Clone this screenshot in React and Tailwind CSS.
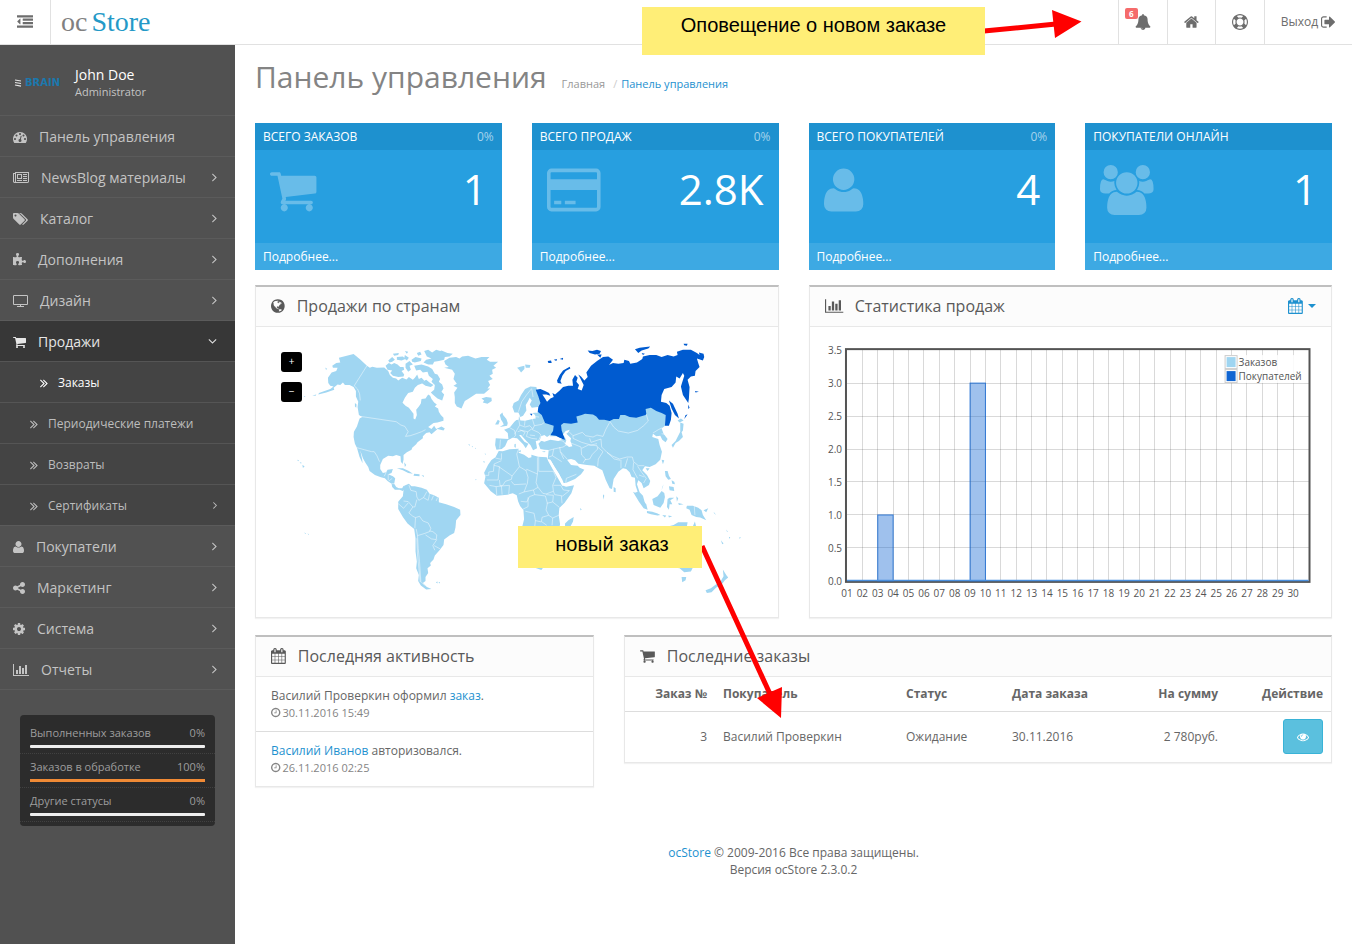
const ICONS = {
  outdent: { x: 0, w: 1792, d: "M384 544v576q0 13-9.5 22.5t-22.5 9.5q-14 0-23-9l-288-288q-9-9-9-23t9-23l288-288q9-9 23-9 13 0 22.5 9.5t9.5 22.5zm1408 768v192q0 13-9.5 22.5t-22.5 9.5h-1728q-13 0-22.5-9.5t-9.5-22.5v-192q0-13 9.5-22.5t22.5-9.5h1728q13 0 22.5 9.5t9.5 22.5zm0-384v192q0 13-9.5 22.5t-22.5 9.5h-1088q-13 0-22.5-9.5t-9.5-22.5v-192q0-13 9.5-22.5t22.5-9.5h1088q13 0 22.5 9.5t9.5 22.5zm0-384v192q0 13-9.5 22.5t-22.5 9.5h-1088q-13 0-22.5-9.5t-9.5-22.5v-192q0-13 9.5-22.5t22.5-9.5h1088q13 0 22.5 9.5t9.5 22.5zm0-384v192q0 13-9.5 22.5t-22.5 9.5h-1728q-13 0-22.5-9.5t-9.5-22.5v-192q0-13 9.5-22.5t22.5-9.5h1728q13 0 22.5 9.5t9.5 22.5z" },
  bell: { x: 0, w: 1792, d: "M912 1696q0-16-16-16-59 0-101.5-42.5t-42.5-101.5q0-16-16-16t-16 16q0 73 51.5 124.5t124.5 51.5q16 0 16-16zm816-288q0 52-38 90t-90 38h-448q0 106-75 181t-181 75-181-75-75-181h-448q-52 0-90-38t-38-90q50-42 91-88t85-119.5 74.5-158.5 50-206 19.5-260q0-152 117-282.5t307-158.5q-8-19-8-39 0-40 28-68t68-28 68 28 28 68q0 20-8 39 190 28 307 158.5t117 282.5q0 139 19.5 260t50 206 74.5 158.5 85 119.5 91 88z" },
  home: { x: 64, w: 1664, d: "M1472 992v480q0 26-19 45t-45 19h-384v-384h-256v384h-384q-26 0-45-19t-19-45v-480q0-1 .5-3t.5-3l575-474 575 474q1 2 1 6zm223-69l-62 74q-8 9-21 11h-3q-13 0-21-7l-692-577-692 577q-12 8-24 7-13-2-21-11l-62-74q-8-10-7-23.5t11-21.5l719-599q32-26 76-26t76 26l244 204v-195q0-14 9-23t23-9h192q14 0 23 9t9 23v408l219 182q10 8 11 21.5t-7 23.5z" },
  lifeRing: { x: 0, w: 1792, d: "M896 0q182 0 348 71t286 191 191 286 71 348-71 348-191 286-286 191-348 71-348-71-286-191-191-286-71-348 71-348 191-286 286-191 348-71zm0 128q-190 0-361 90l194 194q82-28 167-28t167 28l194-194q-171-90-361-90zm-678 1129l194-194q-28-82-28-167t28-167l-194-194q-90 171-90 361t90 361zm678 407q190 0 361-90l-194-194q-82 28-167 28t-167-28l-194 194q171 90 361 90zm0-384q159 0 271.5-112.5t112.5-271.5-112.5-271.5-271.5-112.5-271.5 112.5-112.5 271.5 112.5 271.5 271.5 112.5zm484-217l194 194q90-171 90-361t-90-361l-194 194q28 82 28 167t-28 167z" },
  signOut: { x: 64, w: 1664, d: "M704 1440q0 4 1 20t.5 26.5-3 23.5-10 19.5-20.5 6.5h-320q-119 0-203.5-84.5t-84.5-203.5v-704q0-119 84.5-203.5t203.5-84.5h320q13 0 22.5 9.5t9.5 22.5q0 4 1 20t.5 26.5-3 23.5-10 19.5-20.5 6.5h-320q-66 0-113 47t-47 113v704q0 66 47 113t113 47h312l11.5 1 11.5 3 8 5.5 7 9 2 13.5zm928-544q0 26-19 45l-544 544q-19 19-45 19t-45-19-19-45v-288h-448q-26 0-45-19t-19-45v-384q0-26 19-45t45-19h448v-288q0-26 19-45t45-19 45 19l544 544q19 19 19 45z" },
  dashboard: { x: 0, w: 1792, d: "M384 1152q0-53-37.5-90.5t-90.5-37.5-90.5 37.5-37.5 90.5 37.5 90.5 90.5 37.5 90.5-37.5 37.5-90.5zm192-448q0-53-37.5-90.5t-90.5-37.5-90.5 37.5-37.5 90.5 37.5 90.5 90.5 37.5 90.5-37.5 37.5-90.5zm428 481l101-382q6-26-7.5-48.5t-38.5-29.5-48 6.5-30 39.5l-101 382q-60 5-107 43.5t-63 98.5q-20 77 20 146t117 89 146-20 89-117q16-60-6-117t-72-91zm660-33q0-53-37.5-90.5t-90.5-37.5-90.5 37.5-37.5 90.5 37.5 90.5 90.5 37.5 90.5-37.5 37.5-90.5zm-640-640q0-53-37.5-90.5t-90.5-37.5-90.5 37.5-37.5 90.5 37.5 90.5 90.5 37.5 90.5-37.5 37.5-90.5zm448 192q0-53-37.5-90.5t-90.5-37.5-90.5 37.5-37.5 90.5 37.5 90.5 90.5 37.5 90.5-37.5 37.5-90.5zm320 448q0 261-141 483-19 29-54 29h-1402q-35 0-54-29-141-221-141-483 0-182 71-348t191-286 286-191 348-71 348 71 286 191 191 286 71 348z" },
  newspaper: { x: 0, w: 2048, d: "M1024 512h-384v384h384v-384zm128 640v128h-640v-128h640zm0-768v640h-640v-640h640zm640 768v128h-512v-128h512zm0-256v128h-512v-128h512zm0-256v128h-512v-128h512zm0-256v128h-512v-128h512zm-1536 960v-960h-128v960q0 26 19 45t45 19 45-19 19-45zm1664 0v-1088h-1536v1088q0 33-11 64h1483q26 0 45-19t19-45zm128-1216v1216q0 80-56 136t-136 56h-1664q-80 0-136-56t-56-136v-1088h256v-128h1792z" },
  tags: { x: 0, w: 1920, d: "M448 448q0-53-37.5-90.5t-90.5-37.5-90.5 37.5-37.5 90.5 37.5 90.5 90.5 37.5 90.5-37.5 37.5-90.5zm1067 576q0 53-37 90l-491 492q-39 37-91 37-53 0-90-37l-715-716q-38-37-64.5-101t-26.5-117v-416q0-52 38-90t90-38h416q53 0 117 26.5t102 64.5l715 714q37 39 37 91zm384 0q0 53-37 90l-491 492q-39 37-91 37-36 0-59-14t-53-45l470-470q37-37 37-90 0-52-37-91l-715-714q-38-38-102-64.5t-117-26.5h224q53 0 117 26.5t102 64.5l715 714q37 39 37 91z" },
  puzzle: { x: 64, w: 1664, d: "M1728 1098q0 81-44.5 135t-123.5 54q-41 0-77.5-17.5t-59-38-56.5-38-71-17.5q-110 0-110 124 0 39 16 115t15 115v5q-22 0-33 1-34 3-97.5 11.5t-115.5 13.5-98 5q-61 0-103-26.5t-42-83.5q0-37 17.5-71t38-56.5 38-59 17.5-77.5q0-79-54-123.5t-135-44.5q-84 0-143 45.5t-59 127.5q0 43 15 83t33.5 64.5 33.5 53 15 50.5q0 45-46 89-37 35-117 35-95 0-245-24-9-2-27.5-4t-27.5-4l-13-2q-1 0-3-1-2 0-2-1v-1024q2 1 17.5 3.5t34 5 21.5 3.5q150 24 245 24 80 0 117-35 46-44 46-89 0-22-15-50.5t-33.5-53-33.5-64.5-15-83q0-82 59-127.5t144-45.5q80 0 134 44.5t54 123.5q0 41-17.5 77.5t-38 59-38 56.5-17.5 71q0 57 42 83.5t103 26.5q64 0 180-15t163-17v2q-1 2-3.5 17.5t-5 34-3.5 21.5q-24 150-24 245 0 80 35 117 44 46 89 46 22 0 50.5-15t53-33.5 64.5-33.5 83-15q82 0 127.5 59t45.5 143z" },
  tv: { x: 0, w: 1920, d: "M1792 1248v-960q0-13-9.5-22.5t-22.5-9.5h-1600q-13 0-22.5 9.5t-9.5 22.5v960q0 13 9.5 22.5t22.5 9.5h1600q13 0 22.5-9.5t9.5-22.5zm128-960v960q0 66-47 113t-113 47h-736v128h352q14 0 23 9t9 23v64q0 14-9 23t-23 9h-832q-14 0-23-9t-9-23v-64q0-14 9-23t23-9h352v-128h-736q-66 0-113-47t-47-113v-960q0-66 47-113t113-47h1600q66 0 113 47t47 113z" },
  cart: { x: 64, w: 1664, d: "M704 1536q0 52-38 90t-90 38-90-38-38-90 38-90 90-38 90 38 38 90zm896 0q0 52-38 90t-90 38-90-38-38-90 38-90 90-38 90 38 38 90zm128-1088v512q0 24-16.5 42.5t-40.5 21.5l-1044 122q13 60 13 70 0 16-24 64h920q26 0 45 19t19 45-19 45-45 19h-1024q-26 0-45-19t-19-45q0-11 8-31.5t16-36 21.5-40 15.5-29.5l-177-823h-204q-26 0-45-19t-19-45 19-45 45-19h256q16 0 28.5 6.5t19.5 15.5 13 24.5 8 26 5.5 29.5 4.5 26h1201q26 0 45 19t19 45z" },
  user: { x: 0, w: 1408, flip: true, d: "M1408 131q0 -120 -73 -189.5t-194 -69.5h-874q-121 0 -194 69.5t-73 189.5q0 53 3.5 103.5t14 109t26.5 108.5t43 97.5t62 81t85.5 53.5t111.5 20q9 0 42 -21.5t74.5 -48t108 -48t133.5 -21.5t133.5 21.5t108 48t74.5 48t42 21.5q61 0 111.5 -20t85.5 -53.5t62 -81t43 -97.5t26.5 -108.5t14 -109t3.5 -103.5zM1088 1024q0 -159 -112.5 -271.5t-271.5 -112.5t-271.5 112.5t-112.5 271.5t112.5 271.5t271.5 112.5t271.5 -112.5t112.5 -271.5z" },
  users: { x: 0, w: 1920, d: "M593 896q-162 5-265 128h-134q-82 0-138-40.5t-56-118.5q0-353 124-353 6 0 43.5 21t97.5 42.5 119 21.5q67 0 133-23-5 37-5 66 0 139 81 256zm1071 637q0 120-73 189.5t-194 69.5h-874q-121 0-194-69.5t-73-189.5q0-53 3.5-103.5t14-109 26.5-108.5 43-97.5 62-81 85.5-53.5 111.5-20q10 0 43 21.5t73 48 107 48 135 21.5 135-21.5 107-48 73-48 43-21.5q61 0 111.5 20t85.5 53.5 62 81 43 97.5 26.5 108.5 14 109 3.5 103.5zm-1024-1277q0 106-75 181t-181 75-181-75-75-181 75-181 181-75 181 75 75 181zm704 384q0 159-112.5 271.5t-271.5 112.5-271.5-112.5-112.5-271.5 112.5-271.5 271.5-112.5 271.5 112.5 112.5 271.5zm576 225q0 78-56 118.5t-138 40.5h-134q-103-123-265-128 81-117 81-256 0-29-5-66 66 23 133 23 59 0 119-21.5t97.5-42.5 43.5-21q124 0 124 353zm-128-609q0 106-75 181t-181 75-181-75-75-181 75-181 181-75 181 75 75 181z" },
  share: { x: 128, w: 1536, d: "M1344 1024q133 0 226.5 93.5t93.5 226.5-93.5 226.5-226.5 93.5-226.5-93.5-93.5-226.5q0-12 2-34l-360-180q-92 86-218 86-133 0-226.5-93.5t-93.5-226.5 93.5-226.5 226.5-93.5q126 0 218 86l360-180q-2-22-2-34 0-133 93.5-226.5t226.5-93.5 226.5 93.5 93.5 226.5-93.5 226.5-226.5 93.5q-126 0-218-86l-360 180q2 22 2 34t-2 34l360 180q92-86 218-86z" },
  cog: { x: 128, w: 1536, d: "M1152 896q0-106-75-181t-181-75-181 75-75 181 75 181 181 75 181-75 75-181zm512-109v222q0 12-8 23t-20 13l-185 28q-19 54-39 91 35 50 107 138 10 12 10 25t-9 23q-27 37-99 108t-94 71q-12 0-26-9l-138-108q-44 23-91 38-16 136-29 186-7 28-36 28h-222q-14 0-24.5-8.5t-11.5-21.5l-28-184q-49-16-90-37l-141 107q-10 9-25 9-14 0-25-11-126-114-165-168-7-10-7-23 0-12 8-23 15-21 51-66.5t54-70.5q-27-50-41-99l-183-27q-13-2-21-12.5t-8-23.5v-222q0-12 8-23t19-13l186-28q14-46 39-92-40-57-107-138-10-12-10-24 0-10 9-23 26-36 98.5-107.5t94.5-71.5q13 0 26 10l138 107q44-23 91-38 16-136 29-186 7-28 36-28h222q14 0 24.5 8.5t11.5 21.5l28 184q49 16 90 37l142-107q9-9 24-9 13 0 25 10 129 119 165 170 7 8 7 22 0 12-8 23-15 21-51 66.5t-54 70.5q26 50 41 98l183 28q13 2 21 12.5t8 23.5z" },
  barChart: { x: 0, w: 2048, d: "M640 896v512h-256v-512h256zm384-512v1024h-256v-1024h256zm1024 1152v128h-2048v-1536h128v1408h1920zm-640-896v768h-256v-768h256zm384-384v1152h-256v-1152h256z" },
  angleRight: { x: 576, w: 640, d: "M1171 960q0 13-10 23l-466 466q-10 10-23 10t-23-10l-50-50q-10-10-10-23t10-23l393-393-393-393q-10-10-10-23t10-23l50-50q10-10 23-10t23 10l466 466q10 10 10 23z" },
  angleDown: { x: 320, w: 1152, d: "M1395 736q0 13-10 23l-466 466q-10 10-23 10t-23-10l-466-466q-10-10-10-23t10-23l50-50q10-10 23-10t23 10l393 393 393-393q10-10 23-10t23 10l50 50q10 10 10 23z" },
  angleDouble: { x: 384, w: 1024, d: "M979 960q0 13-10 23l-466 466q-10 10-23 10t-23-10l-50-50q-10-10-10-23t10-23l393-393-393-393q-10-10-10-23t10-23l50-50q10-10 23-10t23 10l466 466q10 10 10 23zm384 0q0 13-10 23l-466 466q-10 10-23 10t-23-10l-50-50q-10-10-10-23t10-23l393-393-393-393q-10-10-10-23t10-23l50-50q10-10 23-10t23 10l466 466q10 10 10 23z" },
  card: { x: 0, w: 1920, d: "M1760 128q66 0 113 47t47 113v1216q0 66-47 113t-113 47h-1600q-66 0-113-47t-47-113v-1216q0-66 47-113t113-47h1600zm-1600 128q-13 0-22.5 9.5t-9.5 22.5v224h1664v-224q0-13-9.5-22.5t-22.5-9.5h-1600zm1600 1280q13 0 22.5-9.5t9.5-22.5v-608h-1664v608q0 13 9.5 22.5t22.5 9.5h1600zm-1504-128v-128h256v128h-256zm384 0v-128h384v128h-384z" },
  calendar: { x: 64, w: 1664, d: "M192 1664h288v-288h-288v288zm352 0h320v-288h-320v288zm-352-352h288v-320h-288v320zm352 0h320v-320h-320v320zm-352-384h288v-288h-288v288zm736 736h320v-288h-320v288zm-384-736h320v-288h-320v288zm768 736h288v-288h-288v288zm-384-352h320v-320h-320v320zm-352-864v-288q0-13-9.5-22.5t-22.5-9.5h-64q-13 0-22.5 9.5t-9.5 22.5v288q0 13 9.5 22.5t22.5 9.5h64q13 0 22.5-9.5t9.5-22.5zm736 864h288v-320h-288v320zm-384-384h320v-288h-320v288zm384 0h288v-288h-288v288zm32-480v-288q0-13-9.5-22.5t-22.5-9.5h-64q-13 0-22.5 9.5t-9.5 22.5v288q0 13 9.5 22.5t22.5 9.5h64q13 0 22.5-9.5t9.5-22.5zm384-64v1280q0 52-38 90t-90 38h-1408q-52 0-90-38t-38-90v-1280q0-52 38-90t90-38h128v-96q0-66 47-113t113-47h64q66 0 113 47t47 113v96h384v-96q0-66 47-113t113-47h64q66 0 113 47t47 113v96h128q52 0 90 38t38 90z" },
  clock: { x: 128, w: 1536, d: "M1024 544v448q0 14-9 23t-23 9h-320q-14 0-23-9t-9-23v-64q0-14 9-23t23-9h224v-352q0-14 9-23t23-9h64q14 0 23 9t9 23zm416 352q0-148-73-273t-198-198-273-73-273 73-198 198-73 273 73 273 198 198 273 73 273-73 198-198 73-273zm224 0q0 209-103 385.5t-279.5 279.5-385.5 103-385.5-103-279.5-279.5-103-385.5 103-385.5 279.5-279.5 385.5-103 385.5 103 279.5 279.5 103 385.5z" },
  eye: { x: 0, w: 1792, d: "M1664 960q-152-236-381-353 61 104 61 225 0 185-131.5 316.5t-316.5 131.5-316.5-131.5-131.5-316.5q0-121 61-225-229 117-381 353 133 205 333.5 326.5t434.5 121.5 434.5-121.5 333.5-326.5zm-720-384q0-20-14-34t-34-14q-125 0-214.5 89.5t-89.5 214.5q0 20 14 34t34 14 34-14 14-34q0-86 61-147t147-61q20 0 34-14t14-34zm848 384q0 34-20 69-140 230-376.5 368.5t-499.5 138.5-499.5-139-376.5-368q-20-35-20-69t20-69q140-229 376.5-368t499.5-139 499.5 139 376.5 368q20 35 20 69z" },
  globe: { x: 128, w: 1536, d: "M896 128q209 0 385.5 103t279.5 279.5 103 385.5-103 385.5-279.5 279.5-385.5 103-385.5-103-279.5-279.5-103-385.5 103-385.5 279.5-279.5 385.5-103zm274 521q-2 1-9.5 9.5t-13.5 9.5q2 0 4.5-5t5-11 3.5-7q6-7 22-15 14-6 52-12 34-8 51 11-2-2 9.5-13t14.5-12q3-2 15-4.5t15-7.5l2-22q-12 1-17.5-7t-6.5-21q0 2-6 8 0-7-4.5-8t-11.5 1-9 1q-10-3-15-7.5t-8-16.5-4-15q-2-5-9.5-11t-9.5-10q-1-2-2.5-5.5t-3-6.5-4-5.5-5.5-2.5-7 5-7.5 10-4.5 5q-3-2-6-1.5t-4.5 1-4.5 3-5 3.5q-3 2-8.5 3t-8.5 2q15-5-1-11-10-4-16-3 9-4 7.5-12t-8.5-14h5q-1-4-8.5-8.5t-17.5-8.5-13-6q-8-5-34-9.5t-33-.5q-5 6-4.5 10.5t4 14 3.5 12.5q1 6-5.5 13t-6.5 12q0 7 14 15.5t10 21.5q-3 8-16 16t-16 12q-5 8-1.5 18.5t10.5 16.5q2 2 1.5 4t-3.5 4.5-5.5 4-6.5 3.5l-3 2q-11 5-20.5-6t-13.5-26q-7-25-16-30-23-8-29 1-5-13-41-26-25-9-58-4 6-1 0-15-7-15-19-12 3-6 4-17.5t1-13.5q3-13 12-23 1-1 7-8.5t9.5-13.5.5-6q35 4 50-11 5-5 11.5-17t10.5-17q9-6 14-5.5t14.5 5.5 14.5 5q14 1 15.5-11t-7.5-20q12 1 3-17-4-7-8-9-12-4-27 5-8 4 2 8-1-1-9.5 10.5t-16.5 17.5-16-5q-1-1-5.5-13.5t-9.5-13.5q-8 0-16 15 3-8-11-15t-24-8q19-12-8-27-7-4-20.5-5t-19.5 4q-5 7-5.5 11.5t5 8 10.5 5.5 11.5 4 8.5 3q14 10 8 14-2 1-8.5 3.5t-11.5 4.5-6 4q-3 4 0 14t-2 14q-5-5-9-17.5t-7-16.5q7 9-25 6l-10-1q-4 0-16 2t-20.5 1-13.5-8q-4-8 0-20 1-4 4-2-4-3-11-9.5t-10-8.5q-46 15-94 41 6 1 12-1 5-2 13-6.5t10-5.5q34-14 42-7l5-5q14 16 20 25-7-4-30-1-20 6-22 12 7 12 5 18-4-3-11.5-10t-14.5-11-15-5q-16 0-22 1-146 80-235 222 7 7 12 8 4 1 5 9t2.5 11 11.5-3q9 8 3 19 1-1 44 27 19 17 21 21 3 11-10 18-1-2-9-9t-9-4q-3 5 .5 18.5t10.5 12.5q-7 0-9.5 16t-2.5 35.5-1 23.5l2 1q-3 12 5.5 34.5t21.5 19.5q-13 3 20 43 6 8 8 9 3 2 12 7.5t15 10 10 10.5q4 5 10 22.5t14 23.5q-2 6 9.5 20t10.5 23q-1 0-2.5 1t-2.5 1q3 7 15.5 14t15.5 13q1 3 2 10t3 11 8 2q2-20-24-62-15-25-17-29-3-5-5.5-15.5t-4.5-14.5q2 0 6 1.5t8.5 3.5 7.5 4 2 3q-3 7 2 17.5t12 18.5 17 19 12 13q6 6 14 19.5t0 13.5q9 0 20 10t17 20q5 8 8 26t5 24q2 7 8.5 13.5t12.5 9.5l16 8 13 7q5 2 18.5 10.5t21.5 11.5q10 4 16 4t14.5-2.5 13.5-3.5q15-2 29 15t21 21q36 19 55 11-2 1 .5 7.5t8 15.5 9 14.5 5.5 8.5q5 6 18 15t18 15q6-4 7-9-3 8 7 20t18 10q14-3 14-32-31 15-49-18 0-1-2.5-5.5t-4-8.5-2.5-8.5 0-7.5 5-3q9 0 10-3.5t-2-12.5-4-13q-1-8-11-20t-12-15q-5 9-16 8t-16-9q0 1-1.5 5.5t-1.5 6.5q-13 0-15-1 1-3 2.5-17.5t3.5-22.5q1-4 5.5-12t7.5-14.5 4-12.5-4.5-9.5-17.5-2.5q-19 1-26 20-1 3-3 10.5t-5 11.5-9 7q-7 3-24 2t-24-5q-13-8-22.5-29t-9.5-37q0-10 2.5-26.5t3-25-5.5-24.5q3-2 9-9.5t10-10.5q2-1 4.5-1.5t4.5 0 4-1.5 3-6q-1-1-4-3-3-3-4-3 7 3 28.5-1.5t27.5 1.5q15 11 22-2 0-1-2.5-9.5t-.5-13.5q5 27 29 9 3 3 15.5 5t17.5 5q3 2 7 5.5t5.5 4.5 5-.5 8.5-6.5q10 14 12 24 11 40 19 44 7 3 11 2t4.5-9.5 0-14-1.5-12.5l-1-8v-18l-1-8q-15-3-18.5-12t1.5-18.5 15-18.5q1-1 8-3.5t15.5-6.5 12.5-8q21-19 15-35 7 0 11-9-1 0-5-3t-7.5-5-4.5-2q9-5 2-16 5-3 7.5-11t7.5-10q9 12 21 2 7-8 1-16 5-7 20.5-10.5t18.5-9.5q7 2 8-2t1-12 3-12q4-5 15-9t13-5l17-11q3-4 0-4 18 2 31-11 10-11-6-20 3-6-3-9.5t-15-5.5q3-1 11.5-.5t10.5-1.5q15-10-7-16-17-5-43 12zm-163 877q206-36 351-189-3-3-12.5-4.5t-12.5-3.5q-18-7-24-8 1-7-2.5-13t-8-9-12.5-8-11-7q-2-2-7-6t-7-5.5-7.5-4.5-8.5-2-10 1l-3 1q-3 1-5.5 2.5t-5.5 3-4 3 0 2.5q-21-17-36-22-5-1-11-5.5t-10.5-7-10-1.5-11.5 7q-5 5-6 15t-2 13q-7-5 0-17.5t2-18.5q-3-6-10.5-4.5t-12 4.5-11.5 8.5-9 6.5-8.5 5.5-8.5 7.5q-3 4-6 12t-5 11q-2-4-11.5-6.5t-9.5-5.5q2 10 4 35t5 38q7 31-12 48-27 25-29 40-4 22 12 26 0 7-8 20.5t-7 21.5q0 6 2 16z" },
};

function Icon({ name, className = "h-3.5" }) {
  const { x, w, d, flip } = ICONS[name];
  return (
    <svg aria-hidden="true" viewBox={`${x} 0 ${w} 1792`} fill="currentColor" className={`w-auto shrink-0 overflow-visible ${className}`}>
      <path d={d} transform={flip ? "translate(0,1536) scale(1,-1)" : undefined} />
    </svg>
  );
}

const MENU_TOP = [
  { icon: "dashboard", label: "Панель управления" },
  { icon: "newspaper", label: "NewsBlog материалы", arrow: true },
  { icon: "tags", label: "Каталог", arrow: true },
  { icon: "puzzle", label: "Дополнения", arrow: true },
  { icon: "tv", label: "Дизайн", arrow: true },
];
const MENU_SUB = [
  { label: "Заказы", active: true },
  { label: "Периодические платежи" },
  { label: "Возвраты" },
  { label: "Сертификаты", arrow: true },
];
const MENU_BOTTOM = [
  { icon: "user", label: "Покупатели", arrow: true },
  { icon: "share", label: "Маркетинг", arrow: true },
  { icon: "cog", label: "Система", arrow: true },
  { icon: "barChart", label: "Отчеты", arrow: true },
];
const STATS = [
  { label: "Выполненных заказов", value: 0 },
  { label: "Заказов в обработке", value: 100 },
  { label: "Другие статусы", value: 0 },
];
const TILES = [
  { title: "Всего заказов", pct: "0%", icon: "cart", value: "1" },
  { title: "Всего продаж", pct: "0%", icon: "card", value: "2.8K" },
  { title: "Всего покупателей", pct: "0%", icon: "user", value: "4" },
  { title: "Покупатели онлайн", pct: "", icon: "users", value: "1" },
];

function MenuItem({ icon, label, arrow }) {
  return (
    <li className="border-t border-[#5b5b5b]">
      <a href="#" className="flex h-10 items-center pr-[18px] pl-[13px] text-sm text-[#c4c4c4]">
        <span className="flex grow items-center gap-3 pt-0.5"><Icon name={icon} />{label}</span>
        {arrow && <Icon name="angleRight" />}
      </a>
    </li>
  );
}

function Sidebar() {
  return (
    <nav className="w-[235px] shrink-0 bg-[#515151]">
      <div className="flex h-[70px] items-center pt-1.5 pl-3.5">
        <div className="flex w-[61px] items-center gap-[3px]">
          <svg aria-hidden="true" viewBox="0 0 8 8" className="h-2 w-2">
            <path d="M1 1 7 2M1 3.5 7 4.500M1 6 7 7.200" stroke="#e5e5e5" strokeWidth="1.200" fill="none" />
          </svg>
          <span className="font-['DejaVu_Sans',sans-serif] text-[10px] leading-3 font-bold text-[#1c78ad]">BRAIN</span>
        </div>
        <div>
          <div className="text-sm leading-[18px] text-white">John Doe</div>
          <div className="text-[11px] leading-4 text-[#c4c4c4]">Administrator</div>
        </div>
      </div>
      <ul className="border-b border-[#5b5b5b]">
        {MENU_TOP.map((m) => <MenuItem key={m.label} {...m} />)}
        <li className="border-t border-[#5b5b5b]">
          <a href="#" className="flex h-10 items-center bg-[#373737] pr-[18px] pl-[13px] text-sm text-[#e6e6e6]">
            <span className="flex grow items-center gap-3 pt-0.5"><Icon name="cart" />Продажи</span>
            <Icon name="angleDown" />
          </a>
          <ul className="bg-[#444444]">
            {MENU_SUB.map((m) => (
              <li key={m.label} className="border-t border-[#555555]">
                <a href="#" className={`flex h-10 items-center pr-[18px] text-xs ${m.active ? "pl-10 text-white" : "pl-[30px] text-[#bdbdbd]"}`}>
                  <span className="flex grow items-center gap-2.5 pt-0.5"><Icon name="angleDouble" />{m.label}</span>
                  {m.arrow && <Icon name="angleRight" className="h-3" />}
                </a>
              </li>
            ))}
          </ul>
        </li>
        {MENU_BOTTOM.map((m) => <MenuItem key={m.label} {...m} />)}
      </ul>
      <ul className="mx-5 mt-[25px] rounded-sm bg-[#2c2c2c] pt-2.5 pb-1 text-[11px] text-[#9d9d9d]">
        {STATS.map((s) => (
          <li key={s.label} className="mb-[5px] border-b border-dotted border-[#414141] px-2.5 pb-[5px] leading-4 last:mb-0">
            <div className="flex justify-between"><span>{s.label}</span><span>{s.value}%</span></div>
            <div className="mt-1 h-[3px] rounded-[1px] bg-[#eeeeee]">
              <div className="h-[3px] bg-[#f08a35]" style={{ width: `${s.value}%` }} />
            </div>
          </li>
        ))}
      </ul>
    </nav>
  );
}

function Header() {
  const item = "flex items-center border-l border-[#e1e1e1] px-4";
  return (
    <header className="flex h-[45px] border-b border-[#e1e1e1] bg-white text-[#6d6d6d]">
      <button type="button" aria-label="Меню" className="flex w-[51px] items-center justify-center border-r border-[#e1e1e1]">
        <Icon name="outdent" className="h-4" />
      </button>
      <a href="#" className="flex items-center gap-1 pl-2.5 font-['Liberation_Serif',serif] text-[28px] leading-10">
        <span className="text-[#808080]">oc</span><span className="text-[#2499c7]">Store</span>
      </a>
      <div className="ml-auto flex">
        <button type="button" aria-label="Уведомления" className={`relative ${item}`}>
          <Icon name="bell" className="h-4" />
          <span className="absolute top-2 left-1.5 rounded-xs bg-[#f56b6b] px-1 text-[8px] leading-[11px] font-bold text-white">6</span>
        </button>
        <a href="#" aria-label="Магазин" className={item}><Icon name="home" className="h-4" /></a>
        <a href="#" aria-label="Помощь" className={item}><Icon name="lifeRing" className="h-4" /></a>
        <a href="#" className={`gap-[3px] text-xs ${item}`}>Выход<Icon name="signOut" className="h-4" /></a>
      </div>
    </header>
  );
}

function Tile({ title, pct, icon, value }) {
  return (
    <section className="bg-[#279fe0] text-white">
      <h2 className="flex justify-between bg-[#1e91cf] px-2 py-[5px] text-xs leading-[17px] uppercase">
        {title}<span className="text-[#a5d3ec]">{pct}</span>
      </h2>
      <div className="flex h-[93px] items-start justify-between p-[15px]">
        <Icon name={icon} className="h-[50px] opacity-30" />
        <span className="text-[42px] leading-[48px]">{value}</span>
      </div>
      <div className="bg-[#3da9e3] px-2 py-[5px] text-xs leading-[17px]"><a href="#">Подробнее...</a></div>
    </section>
  );
}

function Panel({ icon, title, action, children, className = "" }) {
  return (
    <section className={`self-start border border-t-2 border-[#e8e8e8] border-t-[#bfbfbf] bg-white shadow-[0_1px_1px_rgba(0,0,0,0.05)] ${className}`}>
      <div className="flex h-10 items-center border-b border-[#e8e8e8] bg-[#fcfcfc] px-[15px] pb-0.5">
        <h3 className="flex grow items-center gap-3 text-base text-[#595959]"><Icon name={icon} className="h-4" />{title}</h3>
        {action}
      </div>
      {children}
    </section>
  );
}

const AMERICA = [
  "M252 68 296 57 316 73 336 92 345 98 352 95 366 98 388 97 400 108 405 120 414 128 424 130 430 136 442 128 455 133 462 126 474 134 480 128 487 118 492 132 500 128 508 136 500 146 489 150 480 158 474 170 460 174 450 188 443 203 452 212 462 218 476 236 476 250 481 253 486 240 484 224 492 214 498 205 500 192 512 190 520 178 526 182 530 192 538 202 546 208 540 214 550 220 552 230 558 240 566 248 566 257 548 262 536 264 520 276 530 282 538 272 544 282 560 274 570 280 566 286 548 282 530 298 524 292 514 294 504 304 504 310 488 322 484 328 472 338 470 344 456 352 446 360 446 374 443 387 438 380 437 364 424 360 414 364 400 362 384 372 376 390 376 402 384 414 394 412 398 404 414 402 410 414 400 418 414 424 421 430 418 446 424 456 432 460 442 460 446 452 452 458 444 468 434 464 420 464 412 456 410 446 398 438 390 430 378 427 360 420 344 408 340 396 332 384 324 370 316 346 322 374 323 385 314 366 306 338 300 326 296 306 297 290 306 274 314 250 322 246 312 240 308 216 310 200 303 184 303 168 296 156 284 150 270 150 264 142 256 150 248 148 236 158 238 164 214 172 190 178 192 174 226 162 236 154 226 152 220 144 219 128 230 112 244 108 248 98 234 98 232 92 244 84 256 82Z",
  "M392 92 402 84 410 88 418 84 428 88 436 96 446 96 448 104 440 108 448 118 446 124 430 126 414 122 406 114 412 106 398 104Z",
  "M400 76 412 66 420 74 412 80 404 82ZM414 56 432 54 430 60 418 62ZM426 66 444 64 452 72 440 76 426 74ZM450 60 462 68 456 76 448 70ZM452 86 464 78 474 88 464 92 468 104 460 110 452 98ZM450 48 460 50 456 56ZM470 74 482 66 500 70 498 78 480 82 472 80ZM486 54 496 50 500 58 490 62ZM478 92 500 88 520 94 532 102 540 116 548 118 556 132 552 140 562 148 566 160 560 170 568 178 562 196 548 190 534 178 528 172 538 164 540 150 530 140 534 132 522 122 518 110 504 112 496 104 484 106ZM498 142 514 134 526 144 536 150 528 156 512 152ZM508 48 520 44 532 52 544 44 556 48 560 46 578 54 594 56 584 64 570 66 568 74 552 78 538 80 534 88 520 88 506 82 514 74 530 70 516 64Z",
  "M568 98 582 96 572 88 568 78 584 68 604 66 614 70 622 64 640 62 662 70 680 66 704 66 696 74 706 80 730 80 716 92 724 98 712 104 714 116 704 122 714 132 700 138 706 150 698 160 706 160 688 176 664 176 640 192 630 198 620 220 606 214 600 204 600 186 598 172 608 158 596 152 606 146 596 132 600 116 592 104Z",
  "M680 190 694 186 710 188 711 198 698 206 684 202 688 196Z",
  "M448 452 462 446 470 454 480 454 500 458 516 464 524 476 536 480 552 488 552 502 574 508 598 516 616 524 617 540 604 556 602 578 598 594 584 602 568 614 566 630 554 646 540 662 536 674 526 684 528 692 518 700 520 714 512 726 512 738 504 744 516 756 530 762 514 764 498 752 490 738 492 720 484 700 486 680 482 650 482 610 478 582 458 566 444 546 430 522 430 500 444 484 446 466Z",
  "M426 400 444 400 462 408 474 416 460 414 444 406ZM478 416 494 418 494 424 476 422ZM448 382 454 390 450 396ZM454 376 462 384ZM500 420 508 422 506 426ZM543 742 548 740 548 746ZM551 742 556 741 554 746ZM126 374 132 376 130 379ZM134 381 140 383 138 386ZM142 390 149 394 144 399ZM148 593 153 595 151 597ZM158 596 162 598 160 600ZM172 181 184 178 182 182ZM146 183 151 183 150 186ZM211 97 217 102 213 104ZM300 204 305 208 304 218 300 214ZM312 228 324 244 316 242ZM640 328 646 329 644 332ZM651 333 655 335 652 337ZM661 338 664 340 661 342ZM684 379 691 380 688 383ZM661 432 666 434 663 436ZM690 355 693 357 691 360Z",
];
const AMERICA_BORDERS = "M336 92 298 152 308 162 314 176 316 196M316 244 424 260 438 270 450 274 460 290 452 304 466 302 484 296 500 290 512 284M306 338 328 344 350 350 358 350 366 362 374 380M394 412 388 424M400 418 400 436M412 430 402 438M410 446 420 446M462 450 468 466 484 470 486 486 492 496 506 488 516 470M506 488 520 496 524 478M530 496 536 482M544 498 548 488M446 498 460 500 474 516 480 516 486 494M430 506 446 520 460 504M474 516 462 534 474 544 482 548 480 580M482 548 494 544 504 558 520 564 528 580 524 590 508 596 488 602 484 582M488 602 490 640 494 680 498 740 510 752M486 610 488 660 492 700 496 742M512 600 530 612 544 614 546 600 534 590 524 588M546 614 534 632 540 646M538 632 556 642";

const EURASIA = [
  "M-42 310-4 312-6 294-17 284 0 277 14 260 20 255 26 254 28 243 32 256 46 257 68 252 78 250 76 240 68 234 84 232 90 210 200 200 420 216 468 238 466 272 456 280 462 296 474 312 468 322 458 314 452 302 440 304 430 296 428 306 446 312 450 330 457 350 452 374 438 388 420 396 406 394 398 406 412 420 422 438 418 450 402 460 396 444 386 436 382 448 390 472 400 482 410 520 392 500 374 474 384 470 378 452 376 428 366 426 360 412 350 402 340 400 326 410 312 432 307 462 300 460 288 434 278 406 264 398 254 392 232 390 206 386 196 376 184 372 172 374 184 390 204 392 210 398 224 404 214 418 196 432 168 444 160 444 148 416 134 396 122 374 114 372 117 345 104 344 92 342 86 326 94 318 110 312 78 318 82 340 70 346 62 330 50 318 34 300 28 300 44 320 56 326 48 340 40 328 22 310 8 308-6 316-14 334-24 342-40 344-44 330Z",
  "M8 216 12 204 26 196 34 180 46 162 62 154 80 156 84 176 94 200 84 216 66 218 60 208 66 196 60 188 54 200 48 210 50 226 40 242 32 246 26 232 14 232Z",
  "M-26 254-30 240-22 232-20 240-10 252-6 264-8 272-30 276-18 268-22 260ZM-44 268-36 254-30 258-34 268ZM22 98 34 94 44 92 44 102 34 112 28 104ZM46 88 62 90 60 98 48 98ZM24 348 34 346 32 352ZM96 350 108 348 104 352ZM14 328 18 326 18 338 14 336Z",
  "M512 262 522 266 520 286 516 292 520 306 508 318 498 324 490 338 486 330 498 318 504 306 512 290ZM504 256 514 250 522 256 510 262ZM456 374 464 376 460 388ZM408 400 420 400 414 408ZM466 408 474 408 478 422 484 432 476 434 468 424ZM486 436 494 440 496 448 488 446ZM478 454 492 456 494 468 480 466ZM458 456 462 448 456 466ZM312 456 318 460 318 472 312 470Z",
  "M370 470 382 476 396 492 410 508 414 524 402 520 388 500ZM428 492 444 484 456 468 464 474 466 486 462 504 452 518 432 510ZM474 492 480 488 494 488 482 496 488 508 480 508 478 524 472 516ZM412 528 428 530 444 536 452 540 444 542 424 538 412 534ZM458 540 470 542 466 548ZM476 542 488 544 478 548ZM500 484 506 490 502 500ZM506 504 522 508 508 510ZM532 512 550 512 566 518 576 526 580 540 590 556 572 548 560 546 546 540 540 524 530 520ZM582 526 596 520 590 532ZM596 514 604 520ZM612 530 620 540 614 536ZM622 542 630 550ZM632 556 638 564ZM650 584 656 592 652 590ZM634 616 642 626 638 628ZM658 606 662 606 660 612ZM690 606 694 608 690 612Z",
  "M478 574 492 570 506 562 534 562 532 574 544 584 550 574 556 560 560 576 566 590 574 620 572 650 562 684 550 698 544 710 524 712 510 700 440 690 424 650 440 600ZM516 726 530 726 528 736 518 742ZM640 704 650 720 656 728 646 736 634 752 620 758 606 772 592 774 588 766 604 760 620 748 634 738 642 724ZM192 546 190 560 178 582 166 580 166 566 176 556ZM202 520 206 524ZM212 518 216 524 212 526ZM280 478 284 482 280 494ZM168 546 172 550Z",
];
const RUSSIA = [
  "M78 164 92 162 106 168 118 174 122 182 110 178 98 178 106 190 112 200 122 190 132 186 128 174 136 178 150 166 160 156 176 152 190 152 188 134 196 120 204 128 200 140 208 150 204 162 216 166 222 150 206 118 214 124 224 136 234 126 230 112 244 92 262 78 280 66 296 64 310 74 298 90 310 84 326 86 342 84 344 74 358 78 362 86 382 82 398 72 400 64 420 60 440 60 456 66 474 60 492 64 504 60 502 50 520 44 544 44 562 54 570 60 568 52 582 56 584 66 580 76 562 70 566 84 570 96 558 108 556 122 544 124 534 134 540 156 538 190 536 204 520 180 514 154 524 122 520 114 510 130 500 124 498 142 486 156 464 162 456 180 454 200 470 204 480 212 486 234 484 254 478 272 466 272 468 240 456 234 440 228 424 218 408 222 410 236 408 240 380 248 360 246 346 240 332 240 328 252 312 252 300 258 284 254 268 254 260 244 250 238 226 236 216 240 200 244 204 262 184 266 162 264 154 270 156 286 166 314 150 310 138 302 122 300 130 288 132 272 106 264 96 240 84 230 86 214 92 204 86 184Z",
  "M142 136 150 120 160 106 180 95 182 100 168 108 158 122 152 138 156 146 144 144ZM114 78 124 76 126 84 116 84ZM132 74 142 72 140 78ZM150 72 160 68 160 74ZM234 46 248 48 262 44 274 48 270 56 256 58 240 54ZM262 58 276 58 272 68ZM376 42 390 38 402 36 422 34 416 40 396 46 386 54ZM396 54 406 56 400 60ZM522 26 534 26 532 32 524 30ZM478 196 490 206 504 236 508 250 496 240 486 220ZM536 208 540 218 536 222ZM528 240 534 238 524 252ZM556 168 568 170 558 172ZM60 236 68 236 66 242Z",
];
const EURASIA_BORDERS = "M26 248 30 270 22 284 14 298M30 270 46 276 60 272 68 280 54 290 36 286 24 290M46 256 44 272M68 252 74 272 96 268 104 262M74 272 68 284 86 292 94 300 86 318M54 290 50 304 66 310 82 312M60 300 76 302M30 284 46 292 40 302M72 244 88 246M80 234 78 226M26 230 36 200 50 180 66 160M66 162 70 186M0 278 14 286 18 300 12 308M-28 314-30 340M118 346 132 342 160 336 170 330 160 318 138 314M150 336 152 350 172 372M132 342 128 362 118 366M128 362 156 380M152 350 162 372M168 444 170 430 200 418M170 332 172 316M178 290 190 302 190 310 216 322 244 330 262 326M190 302 218 292 228 302 250 306 262 300 280 304 288 284 300 262M240 310 244 322 262 316 274 312M172 320 194 328 214 336 216 360 228 372 220 384M216 340 236 330 262 332 264 342 248 358 240 372 226 374M264 336 280 350 266 372 264 394M274 312 276 336 292 352 310 364 330 372 352 366 368 366M292 352 314 372 332 376M300 258 312 276 326 288 356 294 384 286 402 272 416 258 410 238M334 374 334 400M354 370 346 396M368 366 372 380 386 392 404 392M372 382 370 404 384 430M384 394 396 412 410 430 402 444M388 420 404 426M430 294 446 284 458 278M554 512 556 540M456 296 466 298";

const AFRICA = "M72 243 84 244 104 238 132 236 132 248 148 254 162 264 170 262 170 254 190 260 216 262 220 272 234 298 248 322 262 346 274 350 298 346 290 370 270 398 254 414 252 436 256 462 250 500 230 560 200 600 170 590 150 520 140 480 148 448 146 420 136 408 130 394 126 376 114 370 98 374 66 377 48 364 28 340 32 320 28 308 40 284 50 270 62 262Z";
const AFRICA_BORDERS = "M30 316H42V306L56 304 58 282 80 272M62 264 80 268 80 250M58 286 74 290 70 330 36 330M72 290 112 318 110 328 92 334 84 346 76 348 74 330M132 236 126 252 134 290 112 318M134 290 154 302 156 298 188 312V262M192 260V304H236M188 312 184 338 190 352 176 360 148 366 158 340 160 322 154 302M236 304 244 322 234 346 236 364 214 372 204 370 190 352M148 366 132 372M110 334 118 344 154 342M44 346 64 350 66 376M64 350 80 348 82 374M80 348 104 346 102 372M236 346 258 346 266 360 284 362 264 378 240 374 236 364M260 378 262 400M214 374 236 376 234 396 254 412M176 360 180 374 164 380 156 396 138 394M160 382 160 410 144 418M180 374 212 378 218 400 214 420 222 436 202 442 200 456 182 452 178 430 152 424M222 436 234 444 252 436M202 456 216 466M234 444 232 466M182 452 180 470M234 396 216 400";

function WorldMap() {
  return (
    <svg role="img" aria-label="Продажи по странам" viewBox="48 21 1476 780" className="h-[260px] w-full">
      <g fill="#a0d6f2">{AMERICA.map((d) => <path key={d} d={d} />)}</g>
      <path d={AMERICA_BORDERS} fill="none" stroke="#fff" strokeWidth="2" opacity=".7" />
      <g transform="translate(660 105)">
        <path d={AFRICA} fill="#a0d6f2" />
        <path d={AFRICA_BORDERS} fill="none" stroke="#fff" strokeWidth="2" opacity=".7" />
      </g>
      <g transform="translate(765 0)">
        <g fill="#a0d6f2">{EURASIA.map((d) => <path key={d} d={d} />)}</g>
        <path d={EURASIA_BORDERS} fill="none" stroke="#fff" strokeWidth="2" opacity=".7" />
        <g fill="#005bd0">{RUSSIA.map((d) => <path key={d} d={d} />)}</g>
        <g fill="#fff">
          <path d="M90 316 94 304 104 300 112 306 124 298 120 304 140 304 158 312 146 318 122 314 104 320Z" />
          <path d="M160 298 168 288 180 284 176 292 170 296 184 310 182 318 188 334 178 336 166 326 170 316Z" />
          <path d="M116 372 124 378 140 404 158 434 164 450 158 452 146 426 128 398Z" />
        </g>
      </g>
    </svg>
  );
}

const DAYS = Array.from({ length: 30 }, (_, i) => String(i + 1).padStart(2, "0"));
const LEVELS = ["0.0", "0.5", "1.0", "1.5", "2.0", "2.5", "3.0", "3.5"];
const dayX = (i) => 22 + (i * 462) / 30;
const levelY = (v) => 239 - v * 66;

function SalesChart() {
  const bars = [{ day: 2, value: 1 }, { day: 8, value: 3 }];
  return (
    <svg role="img" aria-label="Статистика продаж" viewBox="0 0 492 260" className="h-[260px] w-full text-[10px]" fill="#545454">
      <g stroke="#545454" strokeOpacity=".22" shapeRendering="crispEdges">
        {DAYS.slice(1).map((d, i) => <line key={d} x1={dayX(i + 1)} x2={dayX(i + 1)} y1="8" y2="239" />)}
        {LEVELS.slice(1, 7).map((l) => <line key={l} x1="22" x2="484" y1={levelY(+l)} y2={levelY(+l)} />)}
      </g>
      <rect x="21" y="7" width="464" height="233" fill="none" stroke="#545454" strokeWidth="2" />
      {bars.map(({ day, value }) => (
        <rect key={day} x={dayX(day)} y={levelY(value)} width="15.400" height={value * 66} fill="#1065d2" fillOpacity=".4" stroke="#1065d2" strokeOpacity=".8" />
      ))}
      <path d="M22 238.500H484" stroke="#4a90df" strokeWidth="1.500" />
      <rect x="400" y="13" width="80" height="28" fill="#fff" fillOpacity=".85" />
      <rect x="400.500" y="13.500" width="12" height="13" fill="#fff" stroke="#ccc" />
      <rect x="402" y="15" width="9" height="10" fill="#9fd5f1" />
      <rect x="400.500" y="27.500" width="12" height="13" fill="#fff" stroke="#ccc" />
      <rect x="402" y="29" width="9" height="10" fill="#1065d2" />
      <text x="414" y="24">Заказов</text>
      <text x="414" y="38">Покупателей</text>
      {LEVELS.map((l) => <text key={l} x="17" y={levelY(+l) + 4} textAnchor="end">{l}</text>)}
      {DAYS.map((d, i) => <text key={d} x={dayX(i)} y="255" textAnchor="middle">{d}</text>)}
    </svg>
  );
}

function Annotations() {
  return (
    <>
      <svg aria-hidden="true" viewBox="0 0 1352 944" className="pointer-events-none absolute top-0 left-0 h-[944px] w-[1352px]">
        <g stroke="#f00" strokeWidth="5" fill="#f00">
          <path d="M984 31 1056 24M702 546 770 694" />
          <path stroke="none" d="M1081.500 21.500 1052 10 1055 38ZM781 718 757 698 782 687Z" />
        </g>
      </svg>
      <div className="absolute top-[7px] left-[642px] h-12 w-[343px] bg-[#ffee77] pt-1.5 text-center font-['Liberation_Sans',sans-serif] text-xl leading-6 text-black">Оповещение о новом заказе</div>
      <div className="absolute top-[526px] left-[518px] h-[42px] w-[184px] bg-[#ffee77] pt-1.5 pl-1 text-center font-['Liberation_Sans',sans-serif] text-xl leading-6 text-black">новый заказ</div>
    </>
  );
}

function Activity({ children, time }) {
  return (
    <li className="border-b border-[#dddddd] px-[15px] py-2.5 leading-[17px] last:border-b-0">
      <div>{children}</div>
      <div className="flex items-center gap-0.5 text-[11px] text-[#848484]"><Icon name="clock" className="h-[11px]" />{time}</div>
    </li>
  );
}

export default function App() {
  const zoomBtn = "flex h-5 w-[21px] items-center justify-center rounded-[3px] bg-black text-[10px] text-white";
  return (
    <div className="relative flex min-h-screen flex-col bg-white font-['Open_Sans',sans-serif] text-xs text-[#666666]">
      <Header />
      <div className="flex grow">
        <Sidebar />
        <main className="min-w-0 grow px-5">
          <div className="flex h-[78px] items-baseline gap-[15px] pt-3">
            <h1 className="text-[30px] leading-10 text-[#848484]">Панель управления</h1>
            <nav className="flex gap-1 text-[11px] text-[#999999]">
              <a href="#">Главная</a><span className="pl-1 text-[#cccccc]">/</span><a href="#" className="text-[#1e91cf]">Панель управления</a>
            </nav>
          </div>
          <div className="grid grid-cols-4 gap-[30px]">
            {TILES.map((t) => <Tile key={t.title} {...t} />)}
          </div>
          <div className="mt-[15px] grid grid-cols-2 gap-[30px]">
            <Panel icon="globe" title="Продажи по странам">
              <div className="relative p-[15px]">
                <WorldMap />
                <div className="absolute top-[25px] left-[25px] flex flex-col gap-2.5">
                  <button type="button" className={zoomBtn}>+</button>
                  <button type="button" className={zoomBtn}>−</button>
                </div>
              </div>
            </Panel>
            <Panel
              icon="barChart"
              title="Статистика продаж"
              action={
                <button type="button" aria-label="Период" className="flex items-center gap-[5px] text-[#1e91cf]">
                  <Icon name="calendar" className="h-4" />
                  <svg aria-hidden="true" viewBox="0 0 8 4" className="h-1 w-2" fill="currentColor"><path d="M0 0H8L4 4Z" /></svg>
                </button>
              }
            >
              <div className="p-[15px]"><SalesChart /></div>
            </Panel>
          </div>
          <div className="mt-[17px] grid grid-cols-3 gap-[30px]">
            <Panel icon="calendar" title="Последняя активность">
              <ul>
                <Activity time="30.11.2016 15:49">Василий Проверкин оформил <a href="#" className="text-[#1e91cf]">заказ</a>.</Activity>
                <Activity time="26.11.2016 02:25"><a href="#" className="text-[#1e91cf]">Василий Иванов</a> авторизовался.</Activity>
              </ul>
            </Panel>
            <Panel icon="cart" title="Последние заказы" className="col-span-2">
              <table className="w-full table-fixed">
                <thead>
                  <tr className="h-[34px] border-b border-[#dddddd] text-left *:px-2 *:font-bold">
                    <th className="w-[90px] text-right">Заказ №</th>
                    <th>Покупатель</th>
                    <th className="w-[106px]">Статус</th>
                    <th className="w-[126px]">Дата заказа</th>
                    <th className="w-24 text-right">На сумму</th>
                    <th className="w-[105px] text-right">Действие</th>
                  </tr>
                </thead>
                <tbody>
                  <tr className="h-[51px] *:px-2">
                    <td className="text-right">3</td>
                    <td>Василий Проверкин</td>
                    <td>Ожидание</td>
                    <td>30.11.2016</td>
                    <td className="text-right">2 780руб.</td>
                    <td>
                      <a href="#" aria-label="Просмотр" className="ml-auto flex h-[35px] w-10 items-center justify-center rounded-[3px] border border-[#39b3d7] bg-[#5bc0de] text-white">
                        <Icon name="eye" className="h-3" />
                      </a>
                    </td>
                  </tr>
                </tbody>
              </table>
            </Panel>
          </div>
          <footer className="mt-[57px] text-center leading-[17px]">
            <a href="#" className="text-[#1e91cf]">ocStore</a> © 2009-2016 Все права защищены.<br />Версия ocStore 2.3.0.2
          </footer>
        </main>
      </div>
      <Annotations />
    </div>
  );
}
